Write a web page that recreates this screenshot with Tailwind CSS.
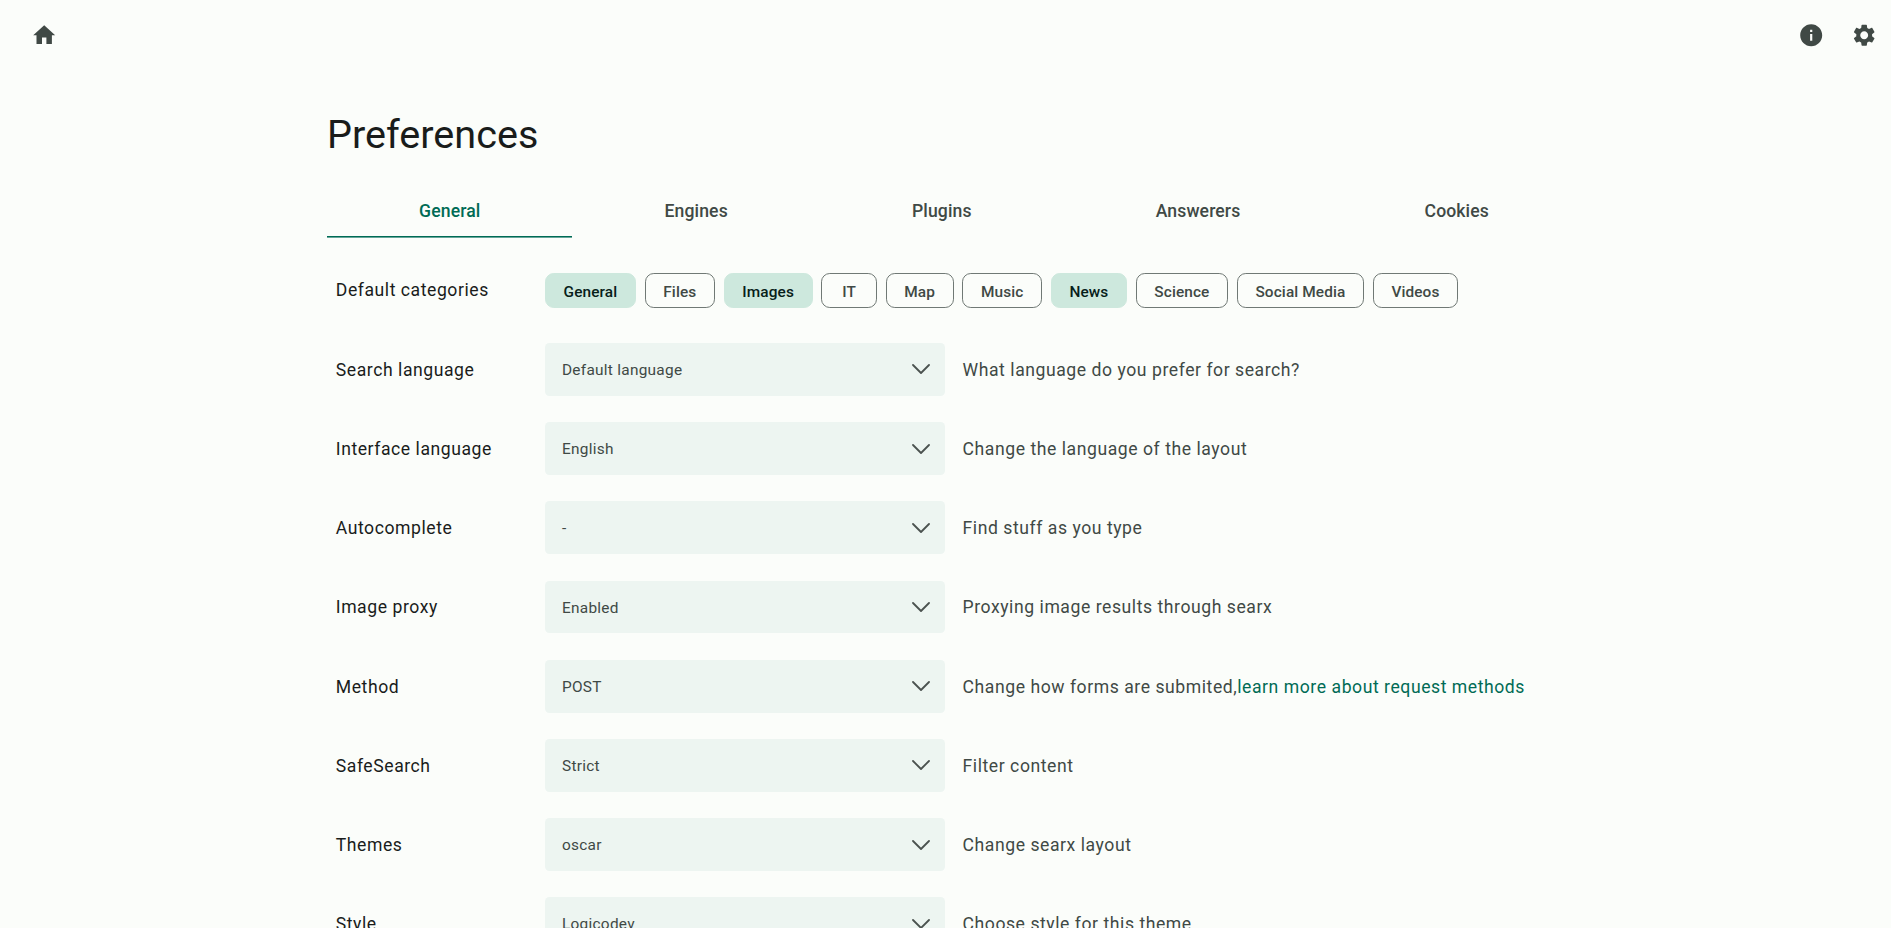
<!DOCTYPE html>
<html lang="en">
<head>
<meta charset="utf-8">
<title>Preferences</title>
<script src="https://cdn.jsdelivr.net/npm/@tailwindcss/browser@4"></script>
</head>
<body class="h-screen overflow-hidden bg-[#fbfdfa] font-[Roboto,sans-serif] text-[17.6px] leading-[26.4px] tracking-[0.55px] text-[#191c1b]">
<header class="flex h-[70px] items-center justify-between pr-[13.6px] pl-[30.8px] text-[#404945]">
  <a href="#" aria-label="Home"><svg class="size-[26.4px]" viewBox="0 0 24 24" fill="currentColor"><path d="M10 20v-6h4v6h5v-8h3L12 3 2 12h3v8z"/></svg></a>
  <nav class="flex gap-[26.4px]">
    <a href="#" aria-label="About"><svg class="size-[26.4px]" viewBox="0 0 24 24" fill="currentColor"><path d="M12 2C6.48 2 2 6.48 2 12s4.48 10 10 10 10-4.480 10-10S17.520 2 12 2zm1 15h-2v-6h2v6zm0-8h-2V7h2v2z"/></svg></a>
    <a href="#" aria-label="Settings"><svg class="size-[26.4px]" viewBox="0 0 24 24" fill="currentColor"><path d="M19.14 12.940c.04-.3.060-.610.060-.940 0-.320-.020-.640-.070-.940l2.030-1.580c.18-.14.230-.410.120-.610l-1.920-3.320c-.12-.220-.370-.290-.590-.220l-2.390.960c-.5-.380-1.030-.7-1.620-.940l-.360-2.540c-.040-.240-.240-.410-.480-.410h-3.840c-.240 0-.430.170-.470.410l-.360 2.540c-.590.240-1.130.570-1.620.940l-2.390-.960c-.220-.080-.470 0-.590.220L2.740 8.870c-.120.210-.080.470.120.610l2.030 1.580c-.050.3-.090.630-.090.940s.020.640.070.940l-2.030 1.580c-.180.140-.230.410-.120.610l1.920 3.320c.120.220.370.290.590.220l2.390-.960c.5.380 1.030.7 1.620.940l.360 2.540c.050.240.240.410.480.410h3.840c.240 0 .440-.170.470-.410l.360-2.540c.590-.240 1.130-.560 1.620-.940l2.390.960c.220.080.470 0 .590-.220l1.920-3.320c.120-.220.070-.470-.120-.610l-2.010-1.580zM12 15.600c-1.980 0-3.600-1.620-3.600-3.600s1.620-3.600 3.600-3.600 3.600 1.620 3.600 3.600-1.620 3.600-3.600 3.600z"/></svg></a>
  </nav>
</header>
<main class="mx-auto w-[1267px] pl-[15px]">
  <h1 class="mt-[41px] text-[39.6px] leading-[48px] tracking-normal">Preferences</h1>
  <div class="-mr-[2px] mt-[25px] flex h-[53px] text-center font-medium tracking-[0.11px] text-[#404945]">
    <a href="#" class="flex-auto border-b border-[#006b55] pt-[14px] text-[#006b55] shadow-[0_1px_0_#66a699]">General</a>
    <a href="#" class="flex-auto pt-[14px]">Engines</a>
    <a href="#" class="flex-auto pt-[14px]">Plugins</a>
    <a href="#" class="flex-auto pt-[14px]">Answerers</a>
    <a href="#" class="flex-auto pt-[14px]">Cookies</a>
  </div>
  <div class="mt-[35.500px] flex h-[36px] pl-[8.800px]">
    <div class="w-[209.200px] pt-[4px]">Default categories</div>
    <div class="flex gap-[8.800px] text-center text-[15.400px] leading-[36px] font-medium tracking-[0.11px] text-[#404945] [&>span]:h-[35.200px] [&>span]:min-w-[55.500px] [&>span]:rounded-[8.800px] [&>span]:border [&>span]:px-[17.600px]">
      <span class="border-[#cde8dd] bg-[#cde8dd] text-[#072019]">General</span>
      <span class="border-[#707975]">Files</span>
      <span class="border-[#cde8dd] bg-[#cde8dd] text-[#072019]">Images</span>
      <span class="border-[#707975]">IT</span>
      <span class="border-[#707975]">Map</span>
      <span class="border-[#707975]">Music</span>
      <span class="border-[#cde8dd] bg-[#cde8dd] text-[#072019]">News</span>
      <span class="border-[#707975]">Science</span>
      <span class="border-[#707975]">Social Media</span>
      <span class="border-[#707975]">Videos</span>
    </div>
  </div>
  <div id="rows" class="mt-[34.600px] flex flex-col gap-[26.400px] pl-[8.800px]"></div>
</main>
<template id="row">
  <div class="flex h-[52.800px] shrink-0 items-center">
    <div class="w-[209.200px] pt-[1px]" data-label></div>
    <div class="flex h-full w-[400px] items-center justify-between rounded-[4.400px] bg-[#edf5f1] pr-[14.500px] pl-[17px] text-[15.400px] tracking-[0.275px] text-[#404945]">
      <span class="pt-[1.600px]" data-value></span>
      <svg class="h-[18px] w-[18px]" viewBox="0 0 18 18" fill="none" stroke="#4b524f" stroke-width="1.800" stroke-linecap="round" stroke-linejoin="round"><path d="M1 5l8 8 8-8"/></svg>
    </div>
    <div class="ml-[17.600px] pt-[1px] whitespace-nowrap text-[#404945]"><span data-note></span><a href="#" class="text-[#006b55]" data-link></a></div>
  </div>
</template>
<script>
const rows = [
  ['Search language', 'Default language', 'What language do you prefer for search?'],
  ['Interface language', 'English', 'Change the language of the layout'],
  ['Autocomplete', '-', 'Find stuff as you type'],
  ['Image proxy', 'Enabled', 'Proxying image results through searx'],
  ['Method', 'POST', 'Change how forms are submited,', 'learn more about request methods'],
  ['SafeSearch', 'Strict', 'Filter content'],
  ['Themes', 'oscar', 'Change searx layout'],
  ['Style', 'Logicodev', 'Choose style for this theme'],
];
const keys = ['label', 'value', 'note', 'link'];
for (const row of rows) {
  const node = document.getElementById('row').content.cloneNode(true);
  keys.forEach((key, i) => { node.querySelector(`[data-${key}]`).textContent = row[i] || ''; });
  document.getElementById('rows').append(node);
}
</script>
</body>
</html>
